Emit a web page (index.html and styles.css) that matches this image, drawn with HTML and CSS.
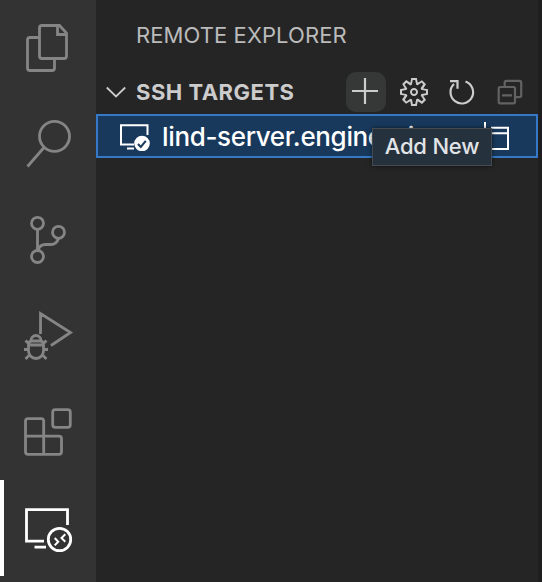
FILE: index.html
```html
<!DOCTYPE html>
<html lang="en">
<head>
<meta charset="utf-8">
<title>Remote Explorer</title>
<link rel="stylesheet" href="styles.css">
</head>
<body>
<div class="workbench">
  <nav class="activity-bar">
    <a class="activity"><svg viewBox="0 0 96 96"><path d="M39 37.5H30q-2.5 0-2.5 2.5v28q0 2.5 2.5 2.5h22q2.500 0 2.500-2.500v-8.500M42 25.500h17.500l7 7.500v23q0 2.500-2.500 2.500H42q-2.500 0-2.500-2.500V28q0-2.500 2.500-2.500zM57.500 26v8.500h9"/></svg></a>
    <a class="activity"><svg viewBox="0 0 96 96"><circle cx="54.500" cy="40.300" r="15"/><path d="M44 51.500 27.500 70.500"/></svg></a>
    <a class="activity"><svg viewBox="0 0 96 96"><circle cx="37.500" cy="31.300" r="6"/><circle cx="58.500" cy="40.300" r="6"/><circle cx="37.500" cy="64.500" r="6"/><path d="M37.500 37.500v21M58.500 46.500c-1.500 4.500-3.500 6-7.500 6h-5.500q-6 0-7.500 6"/></svg></a>
    <a class="activity"><svg viewBox="0 0 96 96"><path d="M40.500 46V25.500L70.500 44.500 51 57.500M28.500 57h15M28.500 56.500v6.500a7.500 7.500 0 0 0 15 0v-6.500q0-3-3-3.500h-9q-3 .5-3 3.500zM31 53v-.5a5 5 0 0 1 10 0v.5M24 61.500h4.500M43.500 61.500h4.500M25.500 52.500l4 4M46.500 52.500l-4 4M25.500 71l4.500-4.500M46.500 71 42 66.500"/></svg></a>
    <a class="activity"><svg viewBox="0 0 96 96"><path d="M28 34.700h13.200q2.500 0 2.500 2.500V70.300M25.500 52.200h33.500q2.500 0 2.500 2.500v13.100q0 2.500-2.500 2.500H28q-2.500 0-2.500-2.500V37.200q0-2.500 2.500-2.500"/><rect x="52.700" y="25.700" width="17.600" height="17.600" rx="2.500"/></svg></a>
    <a class="activity active"><svg viewBox="0 0 96 96"><path d="M44 61.200H26.500V29.700h41V45M34.500 67.200H46"/><circle cx="59.500" cy="59.500" r="11.200"/><path class="fine" d="m54.700 58 3.500 3.700-3.500 3.700M65.300 54.300 61.500 58l3.800 3.700"/></svg></a>
  </nav>
  <main class="sidebar">
    <header class="title">REMOTE EXPLORER</header>
    <section>
      <div class="section-head">
        <svg class="chevron" viewBox="0 0 20 12"><path d="m.8 1.500 9.200 9 9.200-9"/></svg>
        <h3>SSH TARGETS</h3>
        <div class="actions">
          <button class="action hovered"><svg viewBox="0 0 40 40"><path d="M19 6v26M6 19h26"/></svg></button>
          <button class="action"><svg viewBox="0 0 40 40"><path class="gear" transform="translate(4 4) scale(2)" d="M9.1 4.4L8.6 2H7.4l-.5 2.4-.7.3-2-1.3-.9.8 1.3 2-.2.7-2.4.5v1.2l2.4.5.3.8-1.3 2 .8.8 2-1.3.8.3.4 2.3h1.2l.5-2.4.8-.3 2 1.3.8-.8-1.3-2 .3-.8 2.3-.4V7.4l-2.4-.5-.3-.8 1.3-2-.8-.8-2 1.3-.7-.2zM9.4 1l.5 2.4L12 2.1l2 2-1.4 2.1 2.4.4v2.8l-2.4.5L14 12l-2 2-2.1-1.400-.5 2.400H6.600l-.5-2.400L4 13.900l-2-2 1.400-2.100L1 9.400V6.600l2.400-.5L2.100 4l2-2 2.100 1.400.4-2.400h2.800zm.6 7c0 1.100-.9 2-2 2s-2-.9-2-2 .9-2 2-2 2 .9 2 2zM8 9c.6 0 1-.4 1-1s-.4-1-1-1-1 .4-1 1 .4 1 1 1z"/></svg></button>
          <button class="action"><svg viewBox="0 0 40 40"><path d="M23.500 9.500A11.300 11.300 0 1 1 12 12M8 9.200h7.500v7.500"/></svg></button>
          <button class="action disabled"><svg viewBox="0 0 40 40"><rect x="8.700" y="15" width="16.300" height="16.300" rx="1.500"/><path d="M14.700 15V10.500q0-1.700 1.700-1.700h13.100q1.700 0 1.700 1.700V23.500q0 1.700-1.700 1.700H25M12 23.300h10"/></svg></button>
        </div>
      </div>
      <div class="target">
        <svg class="host-icon" viewBox="0 0 32 30"><path d="M16 23.500H3V4.200h26.500V14M9 27.500h7"/><circle class="badge" cx="24" cy="22.500" r="7.800"/><path class="check" d="m20 23 2.800 3 5-6.200"/></svg>
        <span class="host">lind-server.engineeri</span>
        <span class="row-action">
          <svg viewBox="0 0 32 30"><path d="M3 1v10M9 6.800h17v21.200H9M9 12.200h17"/></svg>
          <span class="tooltip">Add New</span>
        </span>
      </div>
    </section>
  </main>
</div>
</body>
</html>
```
FILE: styles.css
```css
* { box-sizing: border-box; }
body {
  margin: 0;
  background: #1e1e1e;
  font-family: Inter, "Liberation Sans", sans-serif;
  color: #ccc;
}
.workbench { display: flex; height: 582px; overflow: hidden; }
svg { display: block; fill: none; stroke: currentColor; }
.activity-bar { width: 96px; background: #333; color: #858585; }
.activity { display: block; width: 96px; height: 96px; }
.activity svg { stroke-width: 2.8; }
.activity.active { color: #fff; border-left: 4px solid #fff; }
.activity.active svg { width: 96px; height: 96px; margin-left: -4px; }
.activity .fine { stroke-width: 2; }
.sidebar { width: 442px; background: #252526; }
.title {
  height: 70px;
  padding-left: 40px;
  line-height: 70px;
  font-size: 22px;
  letter-spacing: .08px;
  color: #bbb;
}
.section-head {
  display: flex;
  align-items: center;
  height: 44px;
  padding: 0 8px 0 10px;
}
.chevron { width: 20px; height: 12px; margin-right: 10px; stroke-width: 1.8; }
h3 {
  margin: 0;
  font-size: 22px;
  font-weight: 700;
  letter-spacing: .5px;
  line-height: 44px;
  white-space: nowrap;
}
.actions { display: flex; gap: 8px; margin-left: auto; }
.action {
  width: 40px;
  height: 40px;
  padding: 0;
  border: 0;
  border-radius: 10px;
  background: none;
  color: #ccc;
}
.action svg { width: 40px; height: 40px; stroke-width: 2.2; }
.action .gear { fill: currentColor; stroke: none; fill-rule: evenodd; }
.hovered { background: #363837; }
.disabled { color: #626262; }
.target {
  display: flex;
  align-items: center;
  height: 44px;
  padding: 0 22px 0 20px;
  border: 2px solid #3478c6;
  background: #18395c;
  color: #fff;
}
.host-icon { width: 32px; height: 30px; stroke-width: 2; }
.badge { fill: #fff; stroke: none; }
.check { stroke: #18395c; }
.host {
  flex: 1;
  min-width: 0;
  margin-left: 12px;
  padding-top: 2px;
  overflow: hidden;
  font-size: 26px;
  font-weight: 500;
  letter-spacing: -.35px;
  line-height: 38px;
  white-space: nowrap;
}
.row-action { position: relative; width: 32px; height: 30px; }
.row-action svg { width: 32px; height: 30px; stroke-width: 2; }
.tooltip {
  position: absolute;
  top: 7px;
  right: 22px;
  width: 120px;
  height: 38px;
  border: 1px solid #454a50;
  background: #26313e;
  box-shadow: 0 0 4px #0009;
  font-size: 22px;
  font-weight: 500;
  letter-spacing: -.2px;
  line-height: 34px;
  text-align: center;
  white-space: nowrap;
  color: #e1e4e7;
}
```
